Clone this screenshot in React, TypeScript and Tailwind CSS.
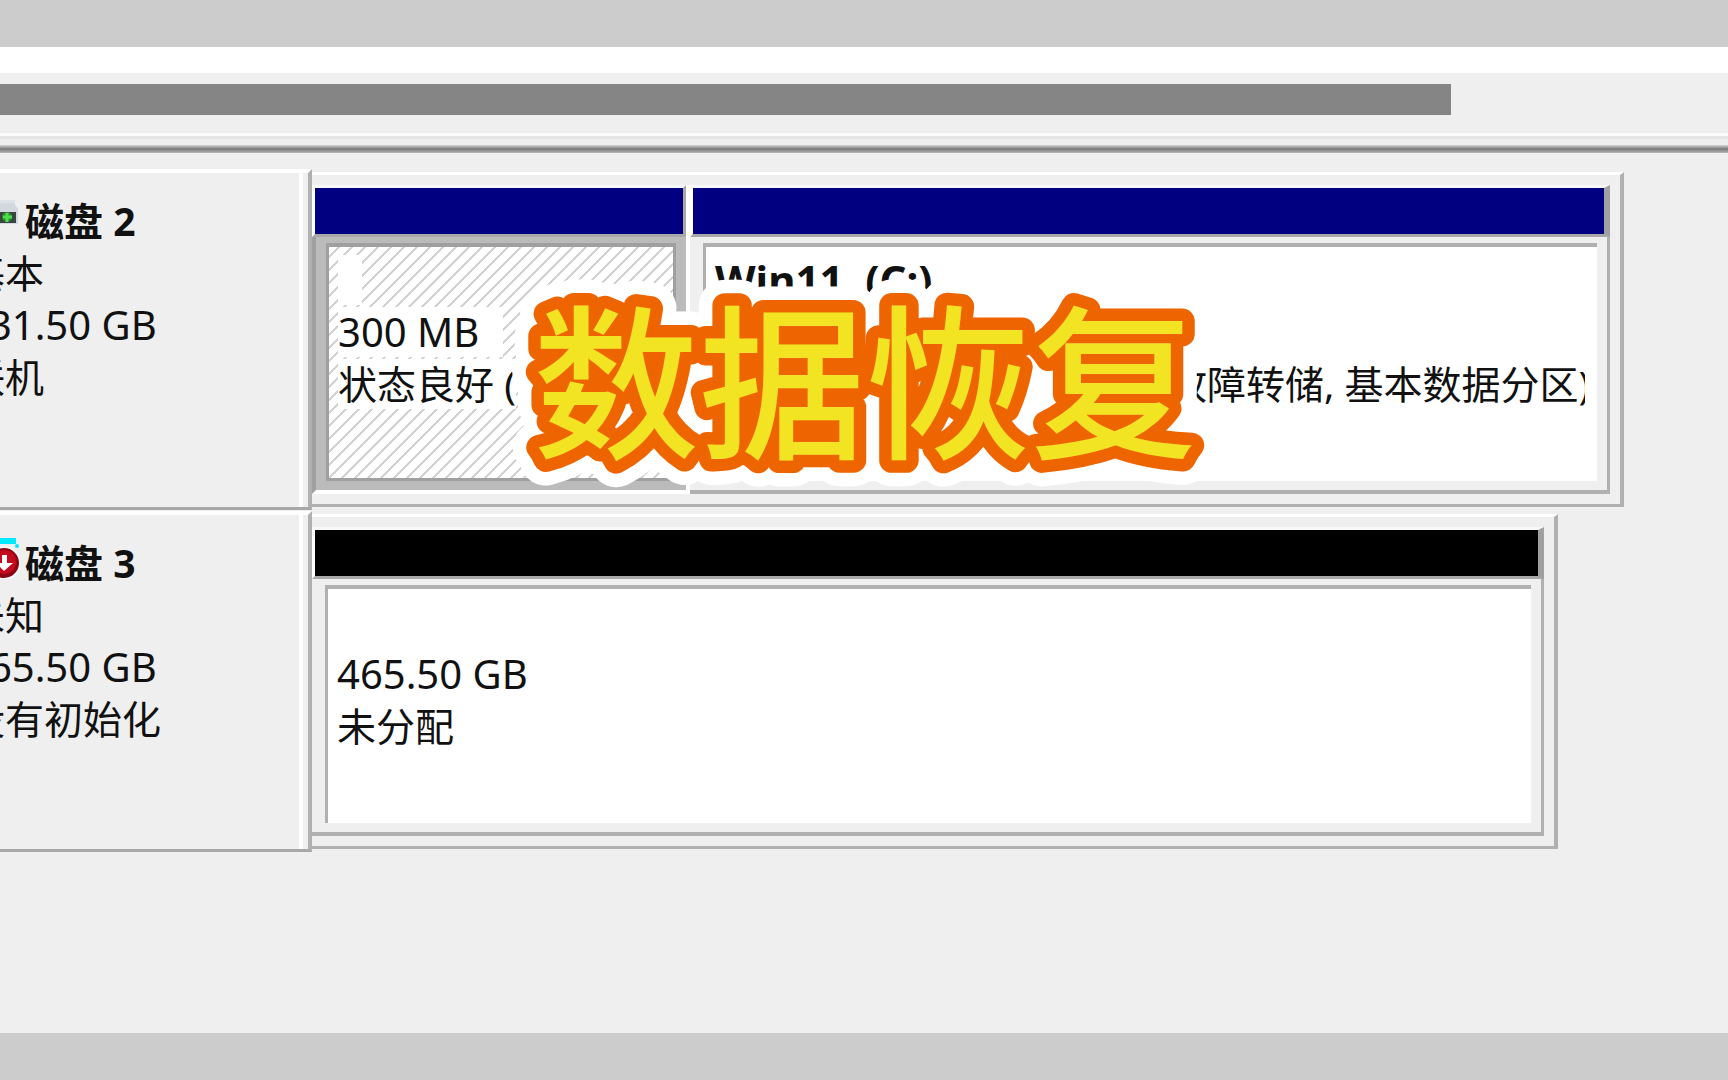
import type { ReactNode } from 'react';
import clsx from 'clsx';

type Volume = {
  name: string;
  size: string;
  status: string;
  selected?: boolean;
  unallocated?: boolean;
};

type Disk = {
  title: string;
  kind: string;
  size: string;
  state: string;
  icon: ReactNode;
  volumes: Volume[];
};

const OnlineDiskIcon = () => (
  <svg width="20" height="42" viewBox="0 0 20 42" aria-hidden="true">
    <path d="M0 5h15v5l3 4v15H0z" fill="#d3d8de" />
    <path d="M0 5h15v3H0z" fill="#dfe2e6" />
    <rect y="17" width="16" height="11" fill="#3c4441" />
    <circle cx="7" cy="22" r="5" fill="#2c8a2c" />
    <path d="M7 18v9M3 22h9" stroke="#4be04b" strokeWidth="3" />
  </svg>
);

const UnknownDiskIcon = () => (
  <svg width="20" height="42" viewBox="0 0 20 42" aria-hidden="true">
    <circle cx="4" cy="26" r="17" fill="#fafafa" />
    <path d="M0 1h16v6H0z" fill="#00eaff" />
    <circle cx="17" cy="9" r="2" fill="#00eaff" />
    <circle cx="4" cy="26" r="15" fill="#8c0613" />
    <circle cx="4" cy="25" r="12" fill="#c40a1c" />
    <path d="M2 18v8h-6l8 8 9-8H7v-8z" fill="#fff" />
  </svg>
);

const disks: Disk[] = [
  {
    title: '磁盘 2',
    kind: '基本',
    size: '931.50 GB',
    state: '联机',
    icon: <OnlineDiskIcon />,
    volumes: [
      { name: '', size: '300 MB', status: '状态良好 (', selected: true },
      {
        name: 'Win11  (C:)',
        size: '931.20 GB NTFS',
        status: '状态良好 (启动, 页面文件, 故障转储, 基本数据分区)',
      },
    ],
  },
  {
    title: '磁盘 3',
    kind: '未知',
    size: '465.50 GB',
    state: '没有初始化',
    icon: <UnknownDiskIcon />,
    volumes: [{ name: '', size: '465.50 GB', status: '未分配', unallocated: true }],
  },
];

const DiskLabel = ({ disk }: { disk: Disk }) => (
  <div className="flex w-[312px] shrink-0 border-t-4 border-r-4 border-b-[3px] border-t-white border-r-[#b0b0b0] border-b-[#a8a8a8] pr-[5px]">
    <div className="min-w-0 flex-1 border-r-4 border-white pt-[22px]">
      <div className="flex items-center">
        <span className="flex h-[52px] w-[25px] shrink-0">{disk.icon}</span>
        <h2 className="text-[39px] leading-[52px] font-bold">{disk.title}</h2>
      </div>
      {/* scrolled sideways, so the first characters run off the left edge */}
      <div className="-ml-[34px] leading-[52px] whitespace-nowrap">
        <p className="text-[39px]">{disk.kind}</p>
        <p className="text-[40px]">{disk.size}</p>
        <p className="text-[39px]">{disk.state}</p>
      </div>
    </div>
  </div>
);

const VolumeBox = ({ volume }: { volume: Volume }) => {
  const { selected, unallocated } = volume;
  const line = clsx('h-[50px] leading-[50px] whitespace-pre', selected && 'bg-white');

  return (
    <section
      className={clsx(
        'flex flex-col',
        selected ? 'w-[378px] shrink-0 border-r-4 border-white' : 'min-w-0 flex-1',
      )}
    >
      <div
        className={clsx(
          'h-[52px] border-t-[3px] border-b-[3px] border-l-[3px] border-t-[#f8f8f8] border-b-[#a8a8a8] border-l-white',
          selected ? 'border-r-[3px] border-r-[#a8a8a8]' : 'border-r-[6px] border-r-[#a0a0a0]',
          unallocated ? 'bg-black' : 'bg-[#000080]',
        )}
      />
      <div
        className={clsx(
          'flex flex-1 border-b-4 pt-1.5 pr-2.5 pb-[9px]',
          selected
            ? 'border-l-4 border-b-white border-l-[#a0a0a0] bg-[#bbbbbb] pl-2.5'
            : 'border-r-[3px] border-r-[#b0b0b0] border-b-[#b0b0b0] pl-[13px]',
        )}
      >
        <div
          className={clsx(
            'min-w-0 flex-1 border-t-4 border-l-[3px] pt-2 pr-3 pl-[9px]',
            selected
              ? 'border-r-[3px] border-b-[3px] border-[#a0a0a0] bg-[linear-gradient(135deg,#d2d2d2_6%,#fff_6%_44%,#d2d2d2_44%_56%,#fff_56%_94%,#d2d2d2_94%)] bg-[length:13px_13px] bg-[position:10px_0px]'
              : 'border-t-[#b0b0b0] border-l-[#b0b0b0] bg-white',
          )}
        >
          <div className="flex flex-col items-start gap-0.5 overflow-hidden">
            <h3 className={clsx(line, 'min-w-6 text-[42px] font-bold')}>{volume.name}</h3>
            <p className={clsx(line, 'text-[40px]', selected && 'pr-6')}>{volume.size}</p>
            <p className={clsx(line, 'text-[39px]')}>{volume.status}</p>
          </div>
        </div>
      </div>
    </section>
  );
};

const DiskRow = ({ disk }: { disk: Disk }) => (
  <div className="flex min-h-[342px] overflow-hidden pb-px">
    <DiskLabel disk={disk} />
    <div
      className={clsx(
        'mt-[3px] mb-[3px] flex min-w-0 flex-1 border-t-[3px] border-r-4 border-b-[3px] border-t-white border-r-[#b0b0b0] border-b-[#b0b0b0] py-2.5 pr-2.5',
        disk.volumes.length > 1 ? 'mr-[104px]' : 'mr-[170px]',
      )}
    >
      {disk.volumes.map((volume) => (
        <VolumeBox key={volume.size} volume={volume} />
      ))}
    </div>
  </div>
);

const captionText = { x: 371, y: 184, textAnchor: 'middle', strokeLinejoin: 'round' } as const;

const Caption = () => (
  <div className="pointer-events-none absolute inset-x-0 top-[215px] flex justify-center">
    <svg
      width="740"
      height="240"
      viewBox="0 0 740 240"
      className="font-['Noto_Sans_CJK_SC',sans-serif] text-[166px] font-medium"
    >
      <text {...captionText} fill="#fff" stroke="#fff" strokeWidth="52" aria-hidden="true">
        数据恢复
      </text>
      <text {...captionText} fill="#f2e423" stroke="#ee6500" strokeWidth="25" paintOrder="stroke">
        数据恢复
      </text>
    </svg>
  </div>
);

const App = () => (
  <div className="flex min-h-screen flex-col overflow-hidden bg-[#cccccc] py-[47px] font-['Noto_Sans','Noto_Sans_CJK_SC',sans-serif] text-[#111111]">
    <main className="relative flex-1 bg-[#efefef]">
      <div className="h-[26px] bg-white" />
      <div className="mt-[11px] mr-[277px] h-[31px] bg-[#858585]" />
      <div className="mt-[18px] h-[3px] bg-[#fbfbfb]" />
      <div className="h-[3px] bg-[#e6e6e6]" />
      <div className="mt-[6px] h-2 bg-linear-to-b from-[#d8d8d8] via-[#787878] to-[#b8b8b8]" />
      <div className="pt-4">
        {disks.map((disk) => (
          <DiskRow key={disk.title} disk={disk} />
        ))}
      </div>
      <Caption />
    </main>
  </div>
);

export default App;
